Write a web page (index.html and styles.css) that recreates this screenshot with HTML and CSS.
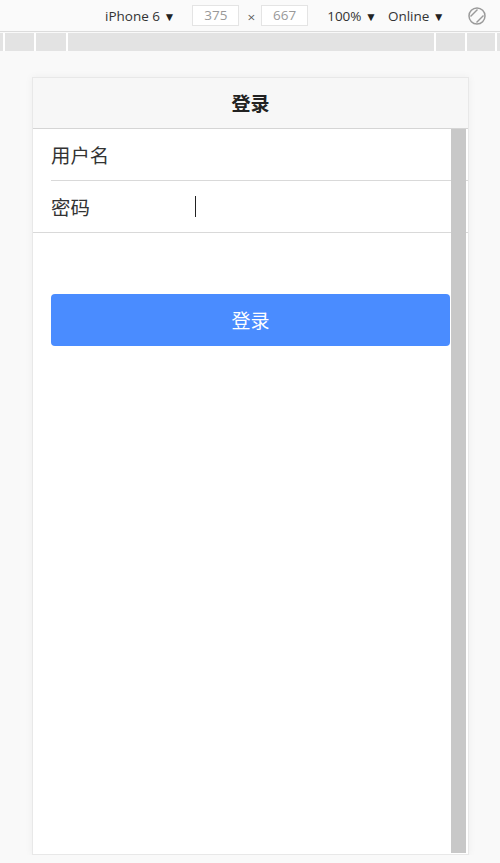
FILE: index.html
```html
<!DOCTYPE html>
<html lang="zh-CN">
<head>
    <meta charset="UTF-8">
    <meta name="viewport" content="width=device-width, initial-scale=1.0">
    <title>登录</title>
    <link rel="stylesheet" href="styles.css">
</head>
<body>
    <!-- 设备工具栏 -->
    <div class="toolbar">
        <span class="device">iPhone 6 <span class="caret">&#9660;</span></span>
        <span class="size-box">375</span>
        <span class="times">&times;</span>
        <span class="size-box">667</span>
        <span class="zoom">100% <span class="caret">&#9660;</span></span>
        <span class="net">Online <span class="caret">&#9660;</span></span>
        <svg class="rotate" width="20" height="20" viewBox="0 0 20 20">
            <circle cx="10" cy="10" r="8" fill="none" stroke="#9a9a9a" stroke-width="1.5"/>
            <line x1="3.5" y1="10.5" x2="10.5" y2="3.5" stroke="#9a9a9a" stroke-width="1.5"/>
            <line x1="9.5" y1="16.5" x2="16.5" y2="9.5" stroke="#9a9a9a" stroke-width="1.5"/>
        </svg>
    </div>

    <div class="media-bar">
        <div class="seg s1"></div>
        <div class="seg s2"></div>
        <div class="seg s3"></div>
        <div class="seg s4"></div>
        <div class="seg s5"></div>
        <div class="seg s6"></div>
        <div class="seg s7"></div>
    </div>

    <!-- 手机画面 -->
    <div class="phone">
        <header class="nav">登录</header>
        <div class="content">
            <div class="form-list">
                <div class="row first">
                    <span class="label">用户名</span>
                </div>
                <div class="row">
                    <span class="label">密码</span>
                    <span class="cursor"></span>
                </div>
            </div>
            <button class="login-btn">登录</button>
            <div class="scrollbar"></div>
        </div>
    </div>
</body>
</html>
```

FILE: styles.css
```css
body {
    margin: 0;
    padding: 0;
    background-color: #f9f9f9;
    font-family: "Noto Sans", "Noto Sans CJK SC", sans-serif;
    overflow: hidden;
}

.toolbar {
    height: 31px;
    border-bottom: 1px solid #dcdcdc;
    background-color: #fafafa;
    display: flex;
    align-items: center;
    padding-left: 105px;
    font-family: "Open Sans", "Noto Sans", sans-serif;
    font-size: 13.5px;
    color: #333;
}

.caret {
    font-size: 12px;
    color: #222;
}

.size-box {
    width: 45px;
    height: 19px;
    border: 1px solid #e4e4e4;
    background-color: #fff;
    color: #999;
    text-align: center;
    line-height: 19px;
    font-size: 13.5px;
}

.device {
    margin-right: 17px;
}

.times {
    margin: 3px 6px 0 8px;
    color: #555;
}

.zoom {
    margin-left: 19px;
}

.net {
    margin-left: 11px;
}

.rotate {
    margin-left: 22px;
}

.media-bar {
    margin-top: 1px;
    height: 18px;
    display: flex;
    gap: 2px;
    background-color: #fff;
}

.seg {
    background-color: #e3e3e3;
}

.s1 { width: 3px; }
.s2 { width: 29px; }
.s3 { width: 30px; }
.s4 { width: 366px; }
.s5 { width: 29px; }
.s6 { width: 28px; }
.s7 { flex: 1; }

.phone {
    margin: 26px 0 0 32px;
    width: 435px;
    height: 776px;
    border: 1px solid #e8e8e8;
    background-color: #fff;
    box-shadow: 0 0 8px rgba(0, 0, 0, 0.05);
}

.nav {
    height: 50px;
    line-height: 52px;
    background-color: #f7f7f7;
    border-bottom: 1px solid #d5d5d5;
    text-align: center;
    font-size: 19px;
    font-weight: bold;
    color: #222;
}

.content {
    position: relative;
    height: 725px;
}

.form-list {
    border-bottom: 1px solid #d9d9d9;
}

.row {
    height: 51px;
    margin-left: 18px;
    display: flex;
    align-items: center;
    font-size: 19.4px;
    color: #333;
}

.row.first {
    border-bottom: 1px solid #d9d9d9;
}

.label {
    width: 144px;
}

.cursor {
    width: 1px;
    height: 21px;
    background-color: #222;
}

.login-btn {
    display: block;
    margin: 61px 18px 0;
    width: 399px;
    height: 52px;
    border: none;
    border-radius: 4px;
    background-color: #4a8cff;
    color: #fff;
    font-family: "Noto Sans", "Noto Sans CJK SC", sans-serif;
    font-size: 19px;
}

/* 滚动条 */
.scrollbar {
    position: absolute;
    top: 0;
    right: 2px;
    width: 15px;
    height: 724px;
    background-color: #c8c8c8;
}
```
